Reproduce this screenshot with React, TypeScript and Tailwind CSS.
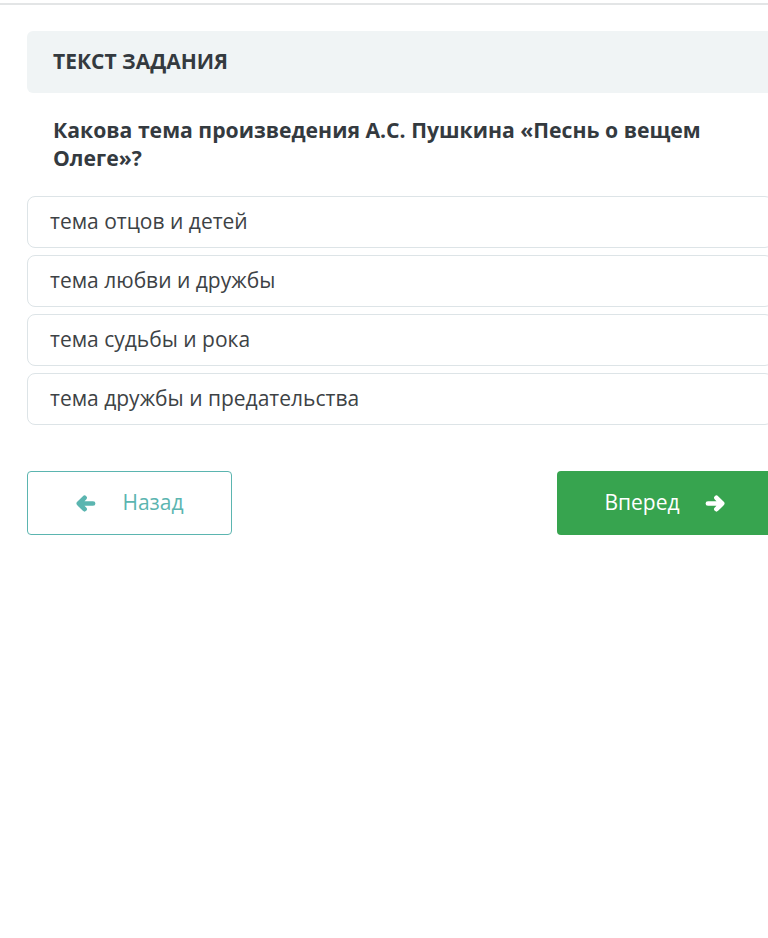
const answers = [
  "тема отцов и детей",
  "тема любви и дружбы",
  "тема судьбы и рока",
  "тема дружбы и предательства",
];

function Arrow({ left }: { left?: boolean }) {
  return (
    <svg
      viewBox="0 0 22 18"
      className={`h-[17px] w-[21px] ${left ? "" : "rotate-180"}`}
      fill="none"
      stroke="currentColor"
      strokeWidth="5"
      strokeLinecap="round"
      strokeLinejoin="round"
      aria-hidden="true"
    >
      <path d="M4 9h15M10 3L4 9l6 6" />
    </svg>
  );
}

export default function App() {
  return (
    <div
      className="min-h-[938px] w-[768px] overflow-hidden bg-white"
      style={{ fontFamily: '"Open Sans", "Noto Sans", sans-serif' }}
    >
      <div className="mt-[3px] h-[2px] w-full bg-[#e3e5e6]" />

      <div className="ml-[27px] w-[746px] pt-[26px]">
        <div className="flex h-[62px] items-center rounded-md bg-[#f0f4f5] pl-[26px]">
          <h2 className="text-[21px] font-bold text-[#343a3f]">ТЕКСТ ЗАДАНИЯ</h2>
        </div>

        <p className="mt-[23px] px-[26px] text-[21.2px] leading-[28px] font-bold text-[#343a3f]">
          Какова тема произведения А.С. Пушкина «Песнь о вещем Олеге»?
        </p>

        <ul className="mt-[24px] flex flex-col gap-[7px]">
          {answers.map((a) => (
            <li
              key={a}
              className="flex h-[52px] items-center rounded-lg border border-[#dde4e7] pl-[22px] text-[21px] text-[#3d4245]"
            >
              {a}
            </li>
          ))}
        </ul>

        <div className="mt-[46px] flex justify-between">
          <button className="flex h-[64px] w-[205px] items-center justify-center gap-[26px] rounded border border-[#5bb5b0] text-[21px] text-[#5bb5b0]">
            <Arrow left />
            <span>Назад</span>
          </button>
          <button className="flex h-[64px] w-[216px] items-center justify-center gap-[25px] rounded bg-[#37a44f] text-[21px] text-white">
            <span>Вперед</span>
            <Arrow />
          </button>
        </div>
      </div>
    </div>
  );
}
